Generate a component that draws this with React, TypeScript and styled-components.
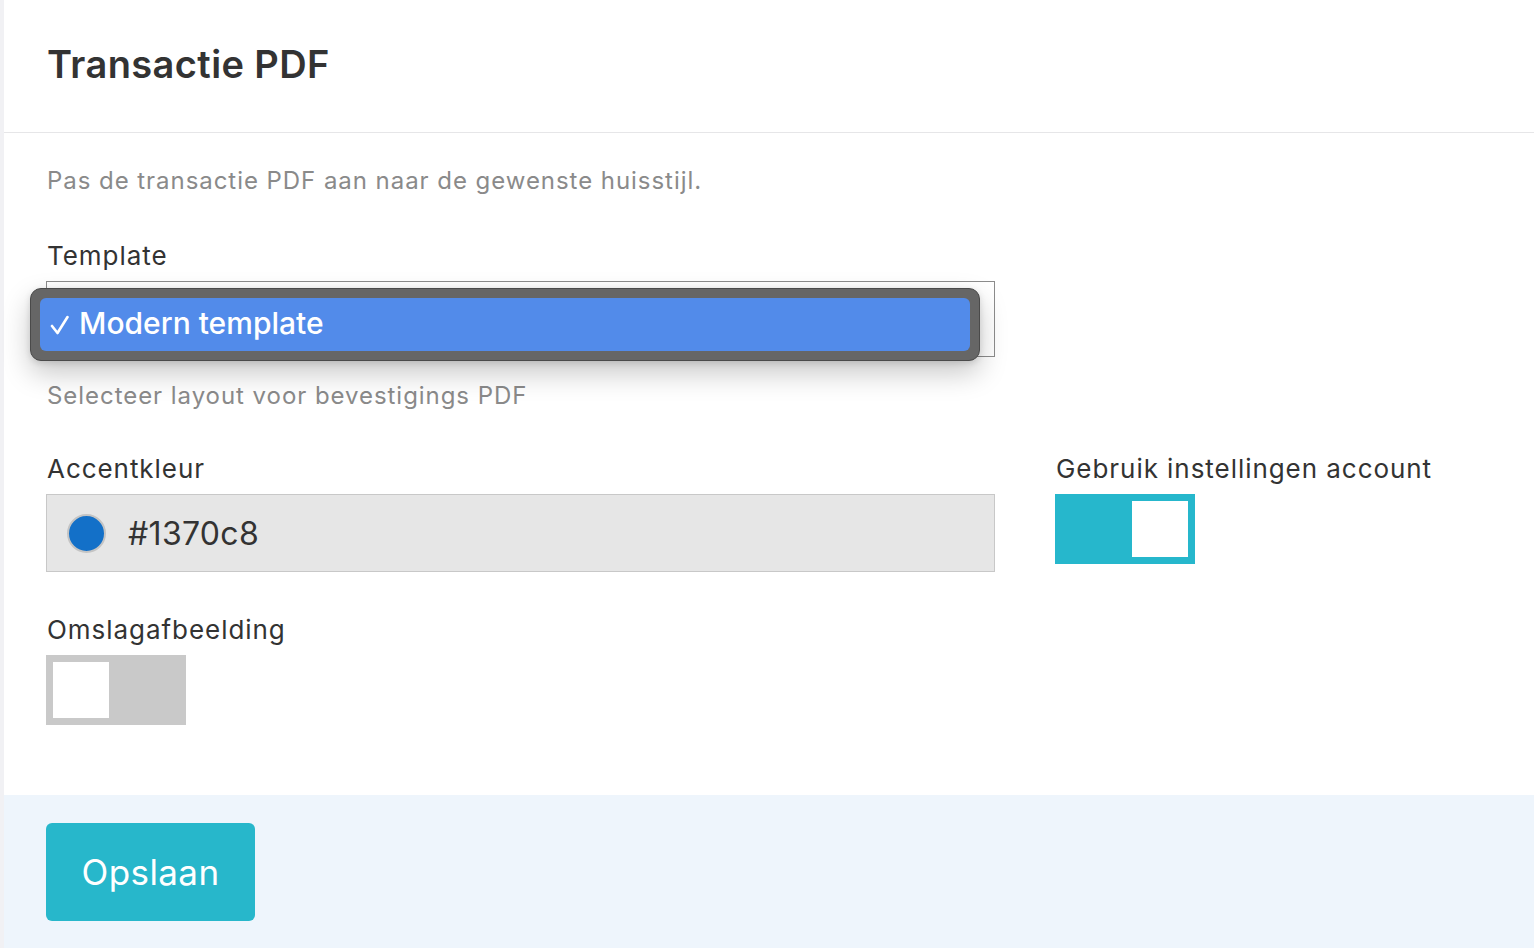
import React from "react";
import styled, { createGlobalStyle } from "styled-components";

const Global = createGlobalStyle`
  html, body { margin: 0; padding: 0; background: #f1f1f4; }
  body { font-family: Inter, "Noto Sans", sans-serif; color: #333; }
  * { box-sizing: border-box; }
`;

const Page = styled.div`
  margin-left: 4px;
  min-height: 948px;
  background: #fff;
  display: flex;
  flex-direction: column;
`;

const Header = styled.header`
  height: 133px;
  border-bottom: 1px solid #e6e6e8;
  display: flex;
  align-items: center;
  padding: 0 43px;
`;

const Title = styled.h1`
  margin: 0;
  font-size: 38px;
  font-weight: 600;
  color: #333;
  letter-spacing: 0.4px;
  padding-bottom: 4px;
`;

const Body = styled.div`
  padding: 30px 42px 70px 42px;
  display: flex;
  flex-direction: column;
`;

const Intro = styled.p`
  margin: 0 0 37px;
  font-size: 24px;
  line-height: 36px;
  color: #8a8a8a;
  letter-spacing: 0.95px;
  padding-left: 1px;
`;

const Field = styled.div<{ $width?: string }>`
  display: flex;
  flex-direction: column;
  width: ${(p) => p.$width ?? "auto"};
`;

const Label = styled.label`
  font-size: 26px;
  line-height: 39px;
  color: #333;
  letter-spacing: 0.95px;
  margin-bottom: 6px;
  padding-left: 1px;
`;

const Help = styled.div`
  margin-top: 21px;
  font-size: 24px;
  line-height: 36px;
  color: #8a8a8a;
  letter-spacing: 0.95px;
  padding-left: 1px;
`;

const SelectWrap = styled.div`
  position: relative;
  height: 76px;
`;

const SelectBox = styled.div`
  height: 76px;
  border: 1px solid #8c8c8c;
  background: #fff;
`;

const Popup = styled.div`
  position: absolute;
  left: -16px;
  top: 7px;
  width: 950px;
  height: 73px;
  background: #666;
  border: 1px solid #4a4a4a;
  border-radius: 11px;
  padding: 9px 9px;
  box-shadow: 0 12px 28px rgba(0, 0, 0, 0.22), 0 2px 6px rgba(0, 0, 0, 0.12);
`;

const Option = styled.div`
  height: 100%;
  background: #528bea;
  border-radius: 6px;
  display: flex;
  align-items: center;
  padding: 0 0 3px 10px;
  color: #fff;
  font-size: 30px;
  font-weight: 500;
  gap: 10px;
`;

const CheckIcon = styled.svg`
  width: 19px;
  height: 20px;
  flex: none;
  margin-top: 4px;
`;

const Row = styled.div<{ $top: number }>`
  display: grid;
  grid-template-columns: 949px 1fr;
  column-gap: 60px;
  margin-top: ${(p) => p.$top}px;
`;

const ColorInput = styled.div`
  height: 78px;
  background: #e6e6e6;
  border: 1px solid #c8c8c8;
  display: flex;
  align-items: center;
  padding-left: 20px;
  gap: 22px;
`;

const Swatch = styled.span<{ $color: string }>`
  width: 39px;
  height: 39px;
  border-radius: 50%;
  background: ${(p) => p.$color};
  border: 2px solid #c4c4c4;
`;

const ColorText = styled.span`
  font-size: 32px;
  color: #333;
  letter-spacing: 0.3px;
`;

const Toggle = styled.div<{ $on: boolean }>`
  width: 140px;
  height: 70px;
  background: ${(p) => (p.$on ? "#26b7cc" : "#c9c9c9")};
  padding: 7px;
  display: flex;
  justify-content: ${(p) => (p.$on ? "flex-end" : "flex-start")};
`;

const Knob = styled.div`
  width: 56px;
  height: 56px;
  background: #fff;
`;

const Footer = styled.footer`
  background: #eef5fc;
  padding: 28px 42px 27px;
  flex: 1;
`;

const Button = styled.button`
  width: 209px;
  height: 98px;
  border: none;
  border-radius: 6px;
  background: #27b7cb;
  color: #fff;
  font-family: Inter, "Noto Sans", sans-serif;
  font-size: 35px;
  font-weight: 400;
  letter-spacing: 0.4px;
  cursor: pointer;
`;

export default function App() {
  return (
    <>
      <Global />
      <Page>
        <Header>
          <Title>Transactie PDF</Title>
        </Header>
        <Body>
          <Intro>Pas de transactie PDF aan naar de gewenste huisstijl.</Intro>
          <Field $width="949px">
            <Label>Template</Label>
            <SelectWrap>
              <SelectBox />
              <Popup>
                <Option>
                  <CheckIcon viewBox="0 0 19 20" aria-hidden="true">
                    <path
                      d="M2 11 L7.5 18 L17.5 2"
                      fill="none"
                      stroke="#fff"
                      strokeWidth="2.6"
                      strokeLinecap="round"
                      strokeLinejoin="round"
                    />
                  </CheckIcon>
                  Modern template
                </Option>
              </Popup>
            </SelectWrap>
            <Help>Selecteer layout voor bevestigings PDF</Help>
          </Field>
          <Row $top={35}>
            <Field>
              <Label>Accentkleur</Label>
              <ColorInput>
                <Swatch $color="#1370c8" />
                <ColorText>#1370c8</ColorText>
              </ColorInput>
            </Field>
            <Field>
              <Label>Gebruik instellingen account</Label>
              <Toggle $on>
                <Knob />
              </Toggle>
            </Field>
          </Row>
          <Row $top={38}>
            <Field>
              <Label>Omslagafbeelding</Label>
              <Toggle $on={false}>
                <Knob />
              </Toggle>
            </Field>
          </Row>
        </Body>
        <Footer>
          <Button>Opslaan</Button>
        </Footer>
      </Page>
    </>
  );
}
